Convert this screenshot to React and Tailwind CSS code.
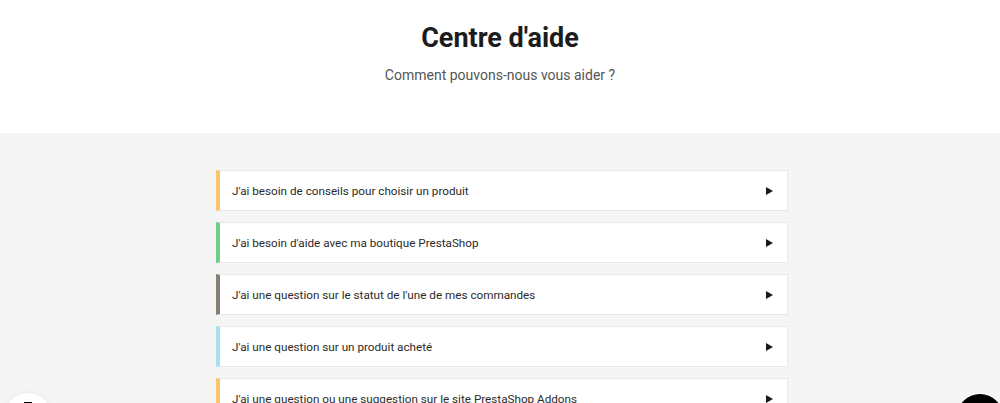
import React from 'react';

const topics = [
  { label: "J'ai besoin de conseils pour choisir un produit", color: 'border-l-[#f9c46b]' },
  { label: "J'ai besoin d'aide avec ma boutique PrestaShop", color: 'border-l-[#6fcf89]' },
  { label: "J'ai une question sur le statut de l'une de mes commandes", color: 'border-l-[#847f72]' },
  { label: "J'ai une question sur un produit acheté", color: 'border-l-[#a8e1ee]' },
  { label: "J'ai une question ou une suggestion sur le site PrestaShop Addons", color: 'border-l-[#f9c46b]' },
];

const TopicRow = ({ label, color }) => (
  <div
    className={`flex items-center justify-between h-[41px] bg-white border border-[#e8e8e8] border-l-4 ${color} pl-[12px] pr-[14px]`}
  >
    <span className="text-[11.7px] text-[#2b2b2b] leading-[16px]">{label}</span>
    <svg width="7" height="8" viewBox="0 0 7 8" className="shrink-0">
      <path d="M0 0 L7 4 L0 8 Z" fill="#1a1a1a" />
    </svg>
  </div>
);

export default function App() {
  return (
    <div
      className="relative w-[1000px] h-[403px] overflow-hidden bg-[#f5f5f5]"
      style={{ fontFamily: 'Roboto, "Noto Sans", sans-serif' }}
    >
      {/* Header */}
      <div className="bg-white h-[133px] flex flex-col items-center pt-[19px]">
        <h1 className="text-[27px] font-bold text-[#1c1c1c] leading-[38px]">Centre d'aide</h1>
        <p className="mt-[8px] text-[14px] text-[#555] leading-[20px]">Comment pouvons-nous vous aider ?</p>
      </div>

      {/* Topics */}
      <div className="w-[572px] ml-[216px] mt-[37px] flex flex-col gap-[11px]">
        {topics.map((t) => (
          <TopicRow key={t.label} {...t} />
        ))}
      </div>

      {/* Floating buttons */}
      <div className="absolute left-[4px] top-[393px] w-[48px] h-[48px] rounded-full bg-white shadow-[0_0_6px_rgba(0,0,0,0.06)] flex justify-center pt-[9px]">
        <div className="w-[8px] h-[2px] bg-black" />
      </div>
      <div className="absolute left-[957px] top-[394px] w-[46px] h-[46px] rounded-full bg-black" />
    </div>
  );
}
